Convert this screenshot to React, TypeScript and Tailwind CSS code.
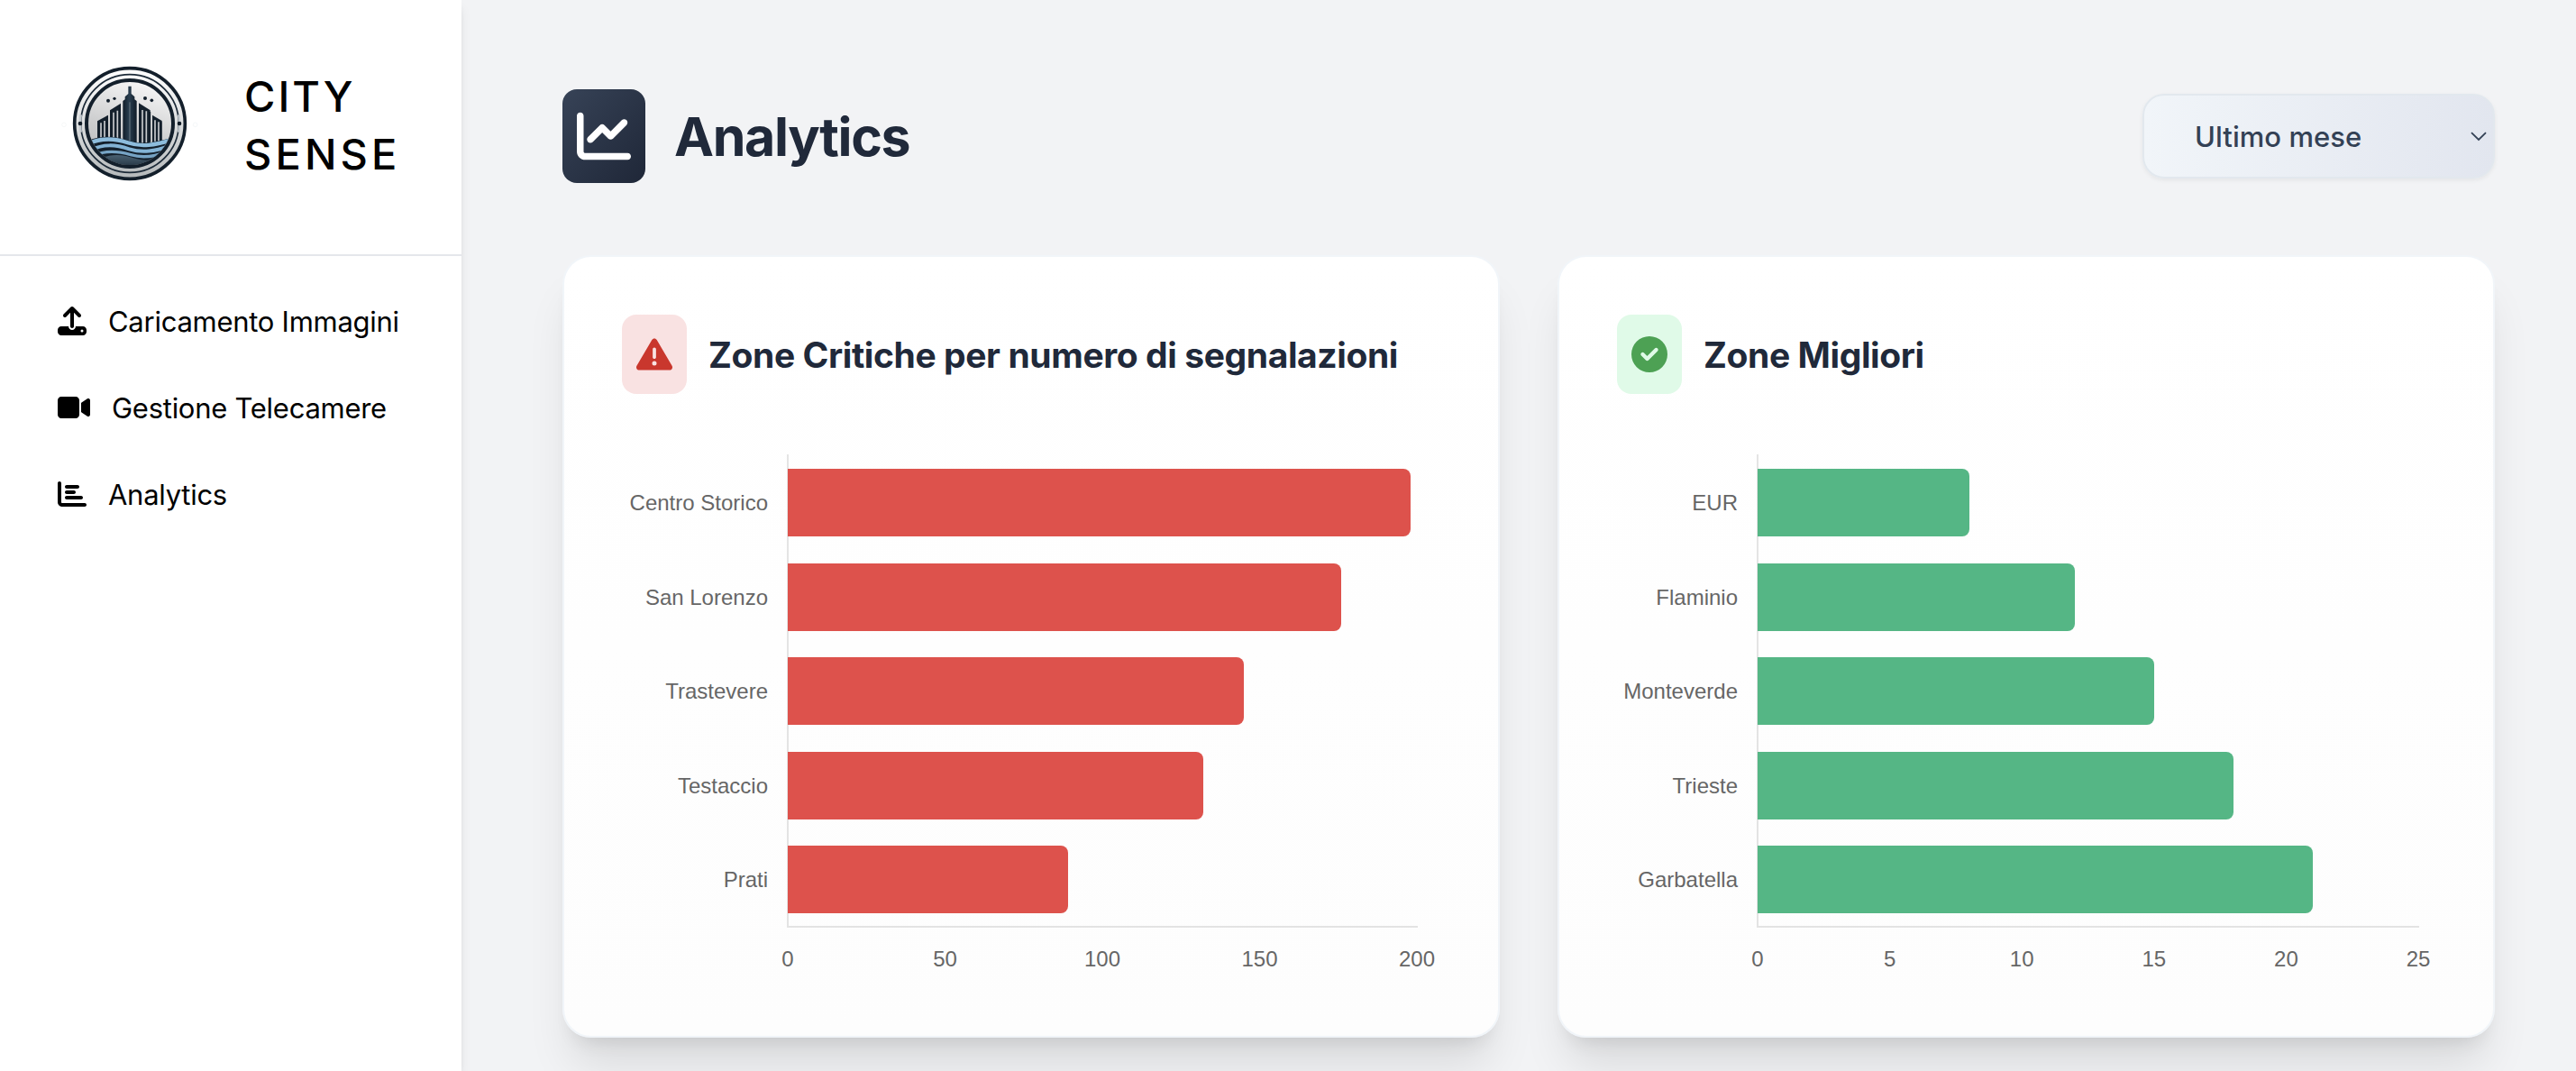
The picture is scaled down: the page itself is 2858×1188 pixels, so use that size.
import type { ReactNode } from "react";
import {
  FaChartBar,
  FaChartLine,
  FaTriangleExclamation,
  FaUpload,
  FaVideo,
} from "react-icons/fa6";

type Zone = { name: string; value: number };

const critical: Zone[] = [
  { name: "Centro Storico", value: 198 },
  { name: "San Lorenzo", value: 176 },
  { name: "Trastevere", value: 145 },
  { name: "Testaccio", value: 132 },
  { name: "Prati", value: 89 },
];

const best: Zone[] = [
  { name: "EUR", value: 8 },
  { name: "Flaminio", value: 12 },
  { name: "Monteverde", value: 15 },
  { name: "Trieste", value: 18 },
  { name: "Garbatella", value: 21 },
];

function Logo() {
  return (
    <svg viewBox="12 21 480 480" className="size-40 shrink-0" aria-label="City Sense">
      <defs>
        <linearGradient id="rim" x1="0" y1="0" x2="0" y2="1">
          <stop offset="0" stopColor="#ffffff" />
          <stop offset="0.5" stopColor="#dcdedf" />
          <stop offset="1" stopColor="#b4b8ba" />
        </linearGradient>
        <linearGradient id="sky" x1="0.6" y1="0" x2="0.3" y2="1">
          <stop offset="0" stopColor="#f6f6f6" />
          <stop offset="0.6" stopColor="#cbcccd" />
          <stop offset="1" stopColor="#b9bbbd" />
        </linearGradient>
        <linearGradient id="tower" x1="0" y1="0" x2="1" y2="0">
          <stop offset="0" stopColor="#101c28" />
          <stop offset="0.45" stopColor="#2a3f50" />
          <stop offset="1" stopColor="#101c28" />
        </linearGradient>
        <linearGradient id="deep" x1="0" y1="0" x2="0" y2="1">
          <stop offset="0" stopColor="#4a6172" />
          <stop offset="1" stopColor="#2a3b49" />
        </linearGradient>
        <clipPath id="disc">
          <circle cx="252" cy="261" r="138" />
        </clipPath>
      </defs>
      <circle cx="33" cy="265" r="7" fill="none" stroke="#f2f4f5" strokeWidth="2" />
      <circle cx="470" cy="265" r="7" fill="none" stroke="#eef3f5" strokeWidth="2" />
      <circle cx="252" cy="261" r="184" fill="url(#rim)" stroke="#131f2b" strokeWidth="11" />
      <circle cx="252" cy="261" r="163" fill="none" stroke="#1b2937" strokeWidth="5" />
      <path d="M89 232 A165 165 0 0 0 89 290 M415 232 A165 165 0 0 1 415 290" fill="none" stroke="#c3c9ce" strokeWidth="8" />
      <circle cx="87" cy="261" r="7" fill="#101b26" />
      <circle cx="417" cy="261" r="7" fill="#101b26" />
      <circle cx="252" cy="261" r="144" fill="url(#sky)" stroke="#131f2b" strokeWidth="12" />
      <g clipPath="url(#disc)">
        <g fill="#14202c">
          <circle cx="180" cy="185" r="6" />
          <circle cx="201" cy="178" r="5" />
          <circle cx="303" cy="177" r="6" />
          <circle cx="325" cy="184" r="5.5" />
          <path d="M144 253 L180 233 V318 H144Z" />
          <path d="M186 217 L222 194 V318 H186Z" />
          <path d="M282 193 L320 217 V330 H282Z" />
          <path d="M327 233 L359 252 V330 H327Z" />
        </g>
        <path
          d="M156 259V310M168 252V310M198 224V310M211 218V310M294 216V330M307 220V330M336 250V320M348 256V320"
          stroke="#c8cbce"
          strokeWidth="5"
        />
        <path d="M177 236V306M219 200V306M319 222V322M356 256V322" stroke="#14202c" strokeWidth="5" />
        <path d="M229 330 V186 L236 181 V172 L247 162 V137 H257 V162 L268 172 V181 L275 186 V330Z" fill="url(#tower)" />
        <path d="M252 190V320" stroke="#8d989f" strokeWidth="2" />
        <path d="M110 318 C150 303 195 300 240 316 C285 332 330 326 400 306 V420 H110Z" fill="#14202c" />
        <g fill="none" strokeLinecap="butt">
          <path d="M110 329 C155 309 200 309 245 325 C290 340 335 334 400 313" stroke="#8dbcdc" strokeWidth="13" />
          <path d="M120 350 C165 328 205 331 250 346 C295 360 335 353 385 336" stroke="#83b3d5" strokeWidth="12" />
          <path d="M130 369 C170 349 210 352 255 365 C295 377 335 371 375 355" stroke="#76a3c4" strokeWidth="10" />
        </g>
        <path d="M160 376 C200 358 240 368 275 379 C300 386 325 384 350 376 C330 396 300 400 252 400 C210 400 180 393 160 376Z" fill="url(#deep)" />
      </g>
    </svg>
  );
}

function CheckBadgeIcon() {
  return (
    <svg viewBox="0 0 512 512" className="size-10" fill="currentColor">
      <path d="M0 256a256 256 0 1 1 512 0A256 256 0 1 1 0 256zM371.8 211.8C382.7 200.9 382.7 183.1 371.8 172.2C360.9 161.3 343.1 161.3 332.2 172.2L224 280.4L179.8 236.2C168.9 225.3 151.1 225.3 140.2 236.2C129.3 247.1 129.3 264.9 140.2 275.8L204.2 339.8C215.1 350.7 232.9 350.7 243.8 339.8L371.8 211.8z" fillRule="evenodd" />
    </svg>
  );
}

function NavItem({ icon, label }: { icon: ReactNode; label: string }) {
  return (
    <a className="flex h-24 items-center gap-6 text-[32px] text-black">
      {icon}
      <span className="pt-[3px] text-[31px] tracking-[-0.27px] whitespace-nowrap">{label}</span>
    </a>
  );
}

function ZoneCard(props: {
  icon: ReactNode;
  badge: string;
  title: string;
  zones: Zone[];
  max: number;
  ticks: number[];
  bar: string;
  labels: string;
  axis: string;
  tickRow: string;
}) {
  return (
    <section className="h-[868px] w-[1040px] rounded-[32px] border-2 border-[#f1f5f9] bg-linear-to-b from-white to-[#fdfdfd] p-16 shadow-[0_40px_50px_-10px_rgba(0,0,0,0.1),0_16px_20px_-12px_rgba(0,0,0,0.1)]">
      <header className="flex items-center gap-6">
        <div className={"flex h-[88px] w-[72px] items-center justify-center rounded-2xl text-[40px] " + props.badge}>
          {props.icon}
        </div>
        <h2 className="pt-0.5 text-[39px] font-bold tracking-[-0.4px] whitespace-nowrap text-[#20293a]">{props.title}</h2>
      </header>
      <div className="mt-[67px] flex font-['Liberation_Sans',sans-serif] text-2xl text-[#666666]">
        <div className={"shrink-0 pt-[2px] pr-[21px] text-right " + props.labels}>
          {props.zones.map((z) => (
            <div key={z.name} className="flex h-[104.5px] items-center justify-end whitespace-nowrap">
              {z.name}
            </div>
          ))}
        </div>
        <div className={"h-[525px] border-b-2 border-l-2 border-black/10 pt-[1.5px] " + props.axis}>
          {props.zones.map((z) => (
            <div key={z.name} className="mr-px -ml-px flex h-[104.5px] items-center">
              <div
                className={"h-[75.4px] rounded-r-lg " + props.bar}
                style={{ width: `${(z.value / props.max) * 100}%` }}
              />
            </div>
          ))}
        </div>
      </div>
      <div className={"mt-[17px] flex justify-between font-['Liberation_Sans',sans-serif] text-2xl leading-9 text-[#666666] " + props.tickRow}>
        {props.ticks.map((t) => (
          <span key={t} className="flex w-0 justify-center">{t}</span>
        ))}
      </div>
    </section>
  );
}

export default function App() {
  return (
    <div className="flex h-[1188px] w-[2858px] overflow-hidden bg-[#f2f3f5] font-['Inter',sans-serif]">
      <aside className="z-10 w-[512px] shrink-0 bg-white shadow-[0_8px_12px_-2px_rgba(0,0,0,0.1),0_4px_8px_-4px_rgba(0,0,0,0.1)]">
        <div className="flex h-[284px] items-start gap-[47px] border-b-2 border-[#e5e7eb] pt-[57px] pl-16">
          <Logo />
          <div className="flex flex-col pt-[18px] text-[47px] leading-16 font-medium text-black">
            <span className="tracking-[3px]">CITY</span>
            <span className="tracking-[4.1px]">SENSE</span>
          </div>
        </div>
        <nav className="flex flex-col px-16 pt-6">
          <NavItem icon={<FaUpload />} label="Caricamento Immagini" />
          <NavItem icon={<FaVideo className="h-8 w-9" />} label="Gestione Telecamere" />
          <NavItem icon={<FaChartBar />} label="Analytics" />
        </nav>
      </aside>
      <main className="grow pt-[99px] pr-[90px] pl-28">
        <div className="mb-20 flex h-[104px] items-center justify-between">
          <div className="flex items-center gap-8">
            <div className="flex h-[104px] w-[92px] items-center justify-center rounded-2xl bg-linear-to-br from-[#374357] to-[#1f2738] text-[60px] text-white">
              <FaChartLine />
            </div>
            <h1 className="pt-0.5 text-[59px] font-bold tracking-[-1.36px] text-[#20293a]">Analytics</h1>
          </div>
          <div className="flex h-[94px] w-[391px] items-center justify-between rounded-3xl border-2 border-[#e2e8ee] bg-linear-to-r from-[#f1f5f9] to-[#e2e6ef] pr-[7px] pl-14 shadow-[0_2px_5px_rgba(0,0,0,0.06)]">
            <span className="pt-0.5 text-[31px] font-medium tracking-[0.05px] text-[#334155]">Ultimo mese</span>
            <svg viewBox="0 0 18 11" className="h-[11px] w-[18px]" fill="none" stroke="#334155" strokeWidth="1.8">
              <path d="M1 1.2 L9 9 L17 1.2" />
            </svg>
          </div>
        </div>
        <div className="flex gap-16">
          <ZoneCard
            icon={<FaTriangleExclamation />}
            badge="bg-[#f9e2e2] text-[#c9372d]"
            title="Zone Critiche per numero di segnalazioni"
            zones={critical}
            max={200}
            ticks={[0, 50, 100, 150, 200]}
            bar="bg-[#dd524c]"
            labels="w-[183px]"
            axis="w-[700px]"
            tickRow="ml-[184px] w-[698px]"
          />
          <ZoneCard
            icon={<CheckBadgeIcon />}
            badge="bg-[#e0fae8] text-[#4da154]"
            title="Zone Migliori"
            zones={best}
            max={25}
            ticks={[0, 5, 10, 15, 20, 25]}
            bar="bg-[#55b685]"
            labels="w-[155px]"
            axis="w-[735px]"
            tickRow="ml-[156px] w-[733px]"
          />
        </div>
      </main>
    </div>
  );
}
